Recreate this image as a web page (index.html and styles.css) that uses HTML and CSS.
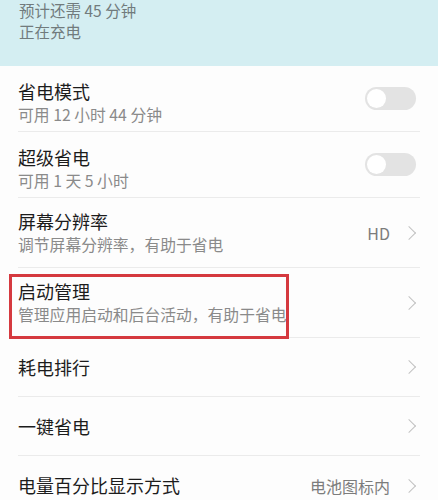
FILE: index.html
```html
<!DOCTYPE html>
<html lang="zh-CN">
<head>
    <meta charset="UTF-8">
    <meta name="viewport" content="width=device-width, initial-scale=1.0">
    <title>电池</title>
    <link rel="stylesheet" href="styles.css">
</head>
<body>
    <div class="header">
        <div class="header-line">预计还需 45 分钟</div>
        <div class="header-line">正在充电</div>
    </div>

    <div class="list">
        <div class="row">
            <div class="text">
                <div class="title">省电模式</div>
                <div class="sub">可用 12 小时 44 分钟</div>
            </div>
            <div class="switch"><span class="knob"></span></div>
        </div>

        <div class="row">
            <div class="text">
                <div class="title">超级省电</div>
                <div class="sub">可用 1 天 5 小时</div>
            </div>
            <div class="switch"><span class="knob"></span></div>
        </div>

        <div class="row wide">
            <div class="text">
                <div class="title">屏幕分辨率</div>
                <div class="sub">调节屏幕分辨率，有助于省电</div>
            </div>
            <div class="value">HD</div>
            <span class="chevron"></span>
        </div>

        <div class="row wide marked">
            <div class="text">
                <div class="title">启动管理</div>
                <div class="sub">管理应用启动和后台活动，有助于省电</div>
            </div>
            <span class="chevron"></span>
            <div class="highlight"></div>
        </div>

        <div class="row single">
            <div class="text">
                <div class="title">耗电排行</div>
            </div>
            <span class="chevron"></span>
        </div>

        <div class="row single">
            <div class="text">
                <div class="title">一键省电</div>
            </div>
            <span class="chevron"></span>
        </div>

        <div class="row single last">
            <div class="text">
                <div class="title">电量百分比显示方式</div>
            </div>
            <div class="value">电池图标内</div>
            <span class="chevron"></span>
        </div>
    </div>
</body>
</html>
```

FILE: styles.css
```css
/* Pantalla de ajustes de batería */
body {
    margin: 0;
    background: #fdfdfd;
    font-family: "Noto Sans CJK SC", "Noto Sans", sans-serif;
    color: #1c1c1c;
}

.header {
    height: 66px;
    background: #d4eef2;
    padding-left: 19px;
    box-sizing: border-box;
}

.header-line {
    font-size: 15.5px;
    line-height: 21px;
    color: #717b7d;
}

.list {
    margin: 0 18px 0 18px;
}

.row {
    position: relative;
    display: flex;
    align-items: center;
    height: 66px;
    border-bottom: 1px solid #ebebeb;
    box-sizing: border-box;
}

.row.wide {
    height: 70px;
}

.row.single {
    height: 59px;
}

.row.last {
    border-bottom: none;
}

.text {
    flex: 1;
    padding-top: 9px;
}

.row.wide .text,
.row.single .text {
    padding-top: 0;
}

.title {
    font-size: 18px;
    line-height: 23px;
}

.sub {
    font-size: 15.8px;
    line-height: 23px;
    color: #8a8a8a;
}

.value {
    font-size: 16px;
    color: #7c7c7c;
    margin-right: 14px;
}

.chevron {
    width: 9px;
    height: 9px;
    border-top: 1.5px solid #c2c2c2;
    border-right: 1.5px solid #c2c2c2;
    transform: rotate(45deg);
    margin-right: 6px;
}

.switch {
    width: 51px;
    height: 23px;
    border-radius: 12px;
    background: #e3e3e3;
    margin-right: 4px;
    display: flex;
    align-items: center;
    padding-left: 2px;
    box-sizing: border-box;
}

.knob {
    width: 19px;
    height: 19px;
    border-radius: 50%;
    background: #ffffff;
}

/* recuadro rojo de anotación */
.highlight {
    position: absolute;
    left: -9px;
    top: 6px;
    width: 280px;
    height: 65px;
    border: 3px solid #d5393f;
    box-sizing: border-box;
}
```
